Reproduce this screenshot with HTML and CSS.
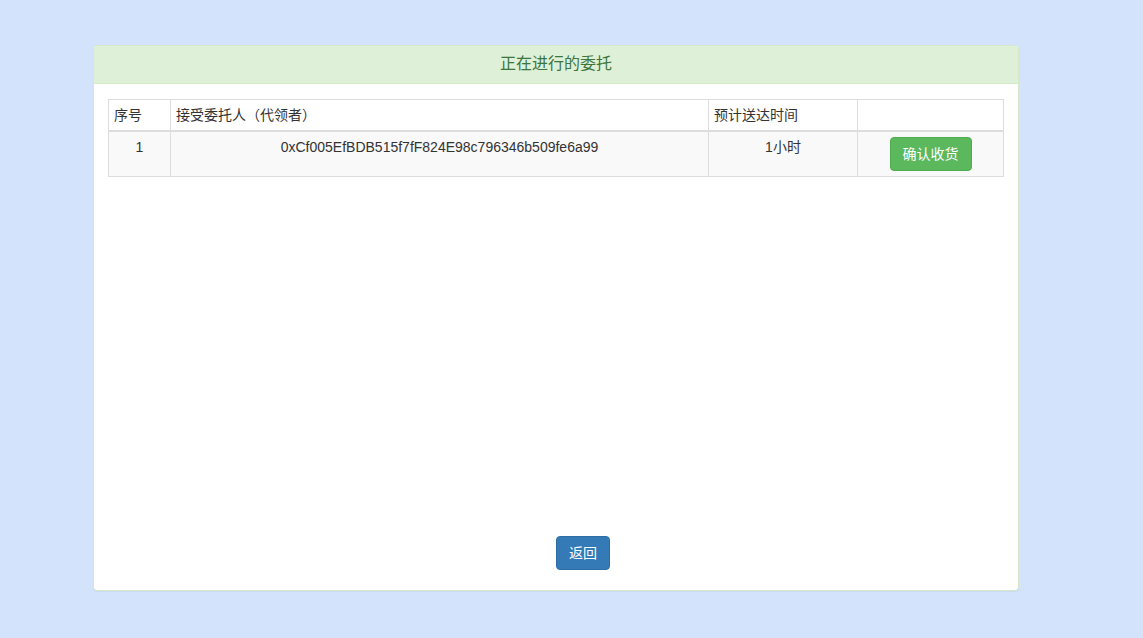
FILE: index.html
```html
<!DOCTYPE html>
<html lang="zh">
<head>
<meta charset="utf-8">
<title>正在进行的委托</title>
<link rel="stylesheet" href="styles.css">
</head>
<body>
<div class="panel">
  <div class="panel-heading">正在进行的委托</div>
  <div class="panel-body">
    <table class="table">
      <colgroup>
        <col class="c1"><col class="c2"><col class="c3"><col class="c4">
      </colgroup>
      <thead>
        <tr><th>序号</th><th>接受委托人（代领者）</th><th>预计送达时间</th><th></th></tr>
      </thead>
      <tbody>
        <tr>
          <td>1</td>
          <td>0xCf005EfBDB515f7fF824E98c796346b509fe6a99</td>
          <td>1小时</td>
          <td><button class="btn btn-success">确认收货</button></td>
        </tr>
      </tbody>
    </table>
    <div class="footer"><button class="btn btn-primary">返回</button></div>
  </div>
</div>
</body>
</html>
```
FILE: styles.css
```css
html, body { margin: 0; padding: 0; }
body {
  background: #d3e3fb;
  font-family: "Liberation Sans", "Noto Sans CJK SC", sans-serif;
  font-size: 14px;
  line-height: 20px;
  color: #333;
  height: 638px;
}
.panel {
  margin: 45px 0 0 93px;
  width: 926px;
  box-sizing: border-box;
  background: #fff;
  border: 1px solid #d6e9c6;
  border-radius: 4px;
  box-shadow: 0 1px 1px rgba(0,0,0,.05);
}
.panel-heading {
  background: #dff0d8;
  color: #3c763d;
  border-bottom: 1px solid #d6e9c6;
  border-radius: 3px 3px 0 0;
  text-align: center;
  font-size: 16px;
  line-height: 18px;
  padding: 9px 15px 10px;
}
.panel-body {
  height: 506px;
  box-sizing: border-box;
  padding: 15px 14px 20px 14px;
  display: flex;
  flex-direction: column;
}
.table {
  width: 895px;
  border-collapse: collapse;
  border: 1px solid #ddd;
  table-layout: fixed;
}
.c1 { width: 62px; }
.c2 { width: 538px; }
.c3 { width: 149px; }
.c4 { width: 146px; }
.table th, .table td {
  border: 1px solid #ddd;
  padding: 5px;
  vertical-align: top;
}
.table th {
  text-align: left;
  font-weight: normal;
  color: #333;
  border-bottom: 2px solid #ddd;
}
.table td { text-align: center; }
.table tbody tr { background: #f9f9f9; }
.btn {
  font-family: inherit;
  font-size: 14px;
  line-height: 20px;
  padding: 6px 12px;
  border: 1px solid transparent;
  border-radius: 4px;
  color: #fff;
  cursor: pointer;
}
.btn-success { background: #5cb85c; border-color: #4cae4c; }
.btn-primary { background: #337ab7; border-color: #2e6da4; }
.footer {
  margin-top: auto;
  display: flex;
  justify-content: center;
  padding-left: 54px;
}
```
